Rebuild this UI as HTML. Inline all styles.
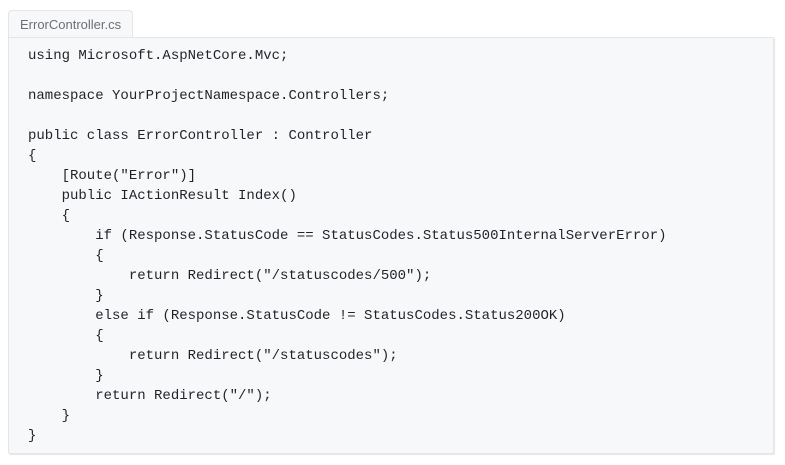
<!DOCTYPE html>
<html><head><style>
body{margin:0;background:#fff;width:785px;height:465px;overflow:hidden}
.tab{position:absolute;left:8px;top:10px;width:125px;height:27px;background:#f7f8fa;border:1px solid #e3e5e8;border-bottom:none;border-radius:4px 4px 0 0;font:13px "Liberation Sans",sans-serif;color:#6a6f76;line-height:27px;padding-left:11px;box-sizing:border-box;z-index:2}
.box{position:absolute;left:8px;top:37px;width:766px;height:417px;background:#f7f8fa;border:1px solid #e3e5e8;box-sizing:border-box;border-radius:0 2px 2px 2px;box-shadow:1px 1px 1px #e6e7ea}
pre{margin:0;position:absolute;left:19px;top:8px;font:14px/20px "Liberation Mono",monospace;color:#1f2328}
</style></head><body>
<div class="tab">ErrorController.cs</div>
<div class="box"><pre>using Microsoft.AspNetCore.Mvc;

namespace YourProjectNamespace.Controllers;

public class ErrorController : Controller
{
    [Route("Error")]
    public IActionResult Index()
    {
        if (Response.StatusCode == StatusCodes.Status500InternalServerError)
        {
            return Redirect("/statuscodes/500");
        }
        else if (Response.StatusCode != StatusCodes.Status200OK)
        {
            return Redirect("/statuscodes");
        }
        return Redirect("/");
    }
}</pre></div>
</body></html>
